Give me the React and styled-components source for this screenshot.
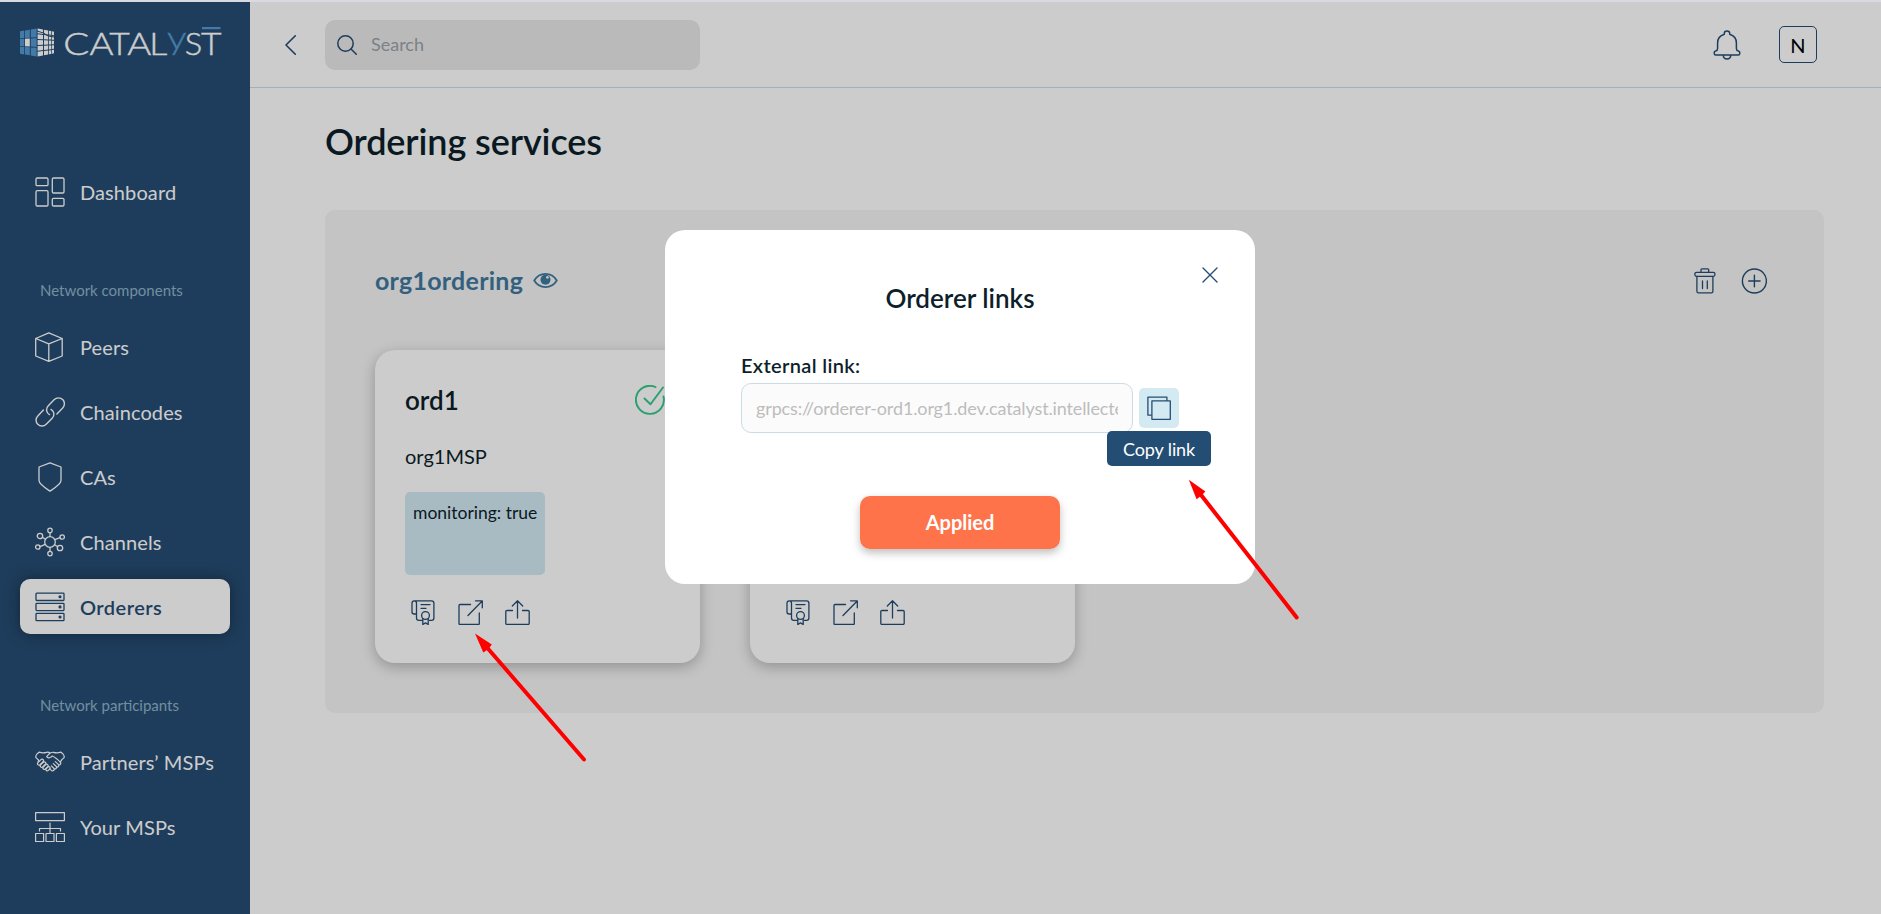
import React from "react";
import styled, { createGlobalStyle, css } from "styled-components";

const GlobalStyle = createGlobalStyle`
  *, *::before, *::after { box-sizing: border-box; }
  body {
    margin: 0;
    background: #ffffff;
    color: #0d1f2b;
    font-family: Lato, "Liberation Sans", sans-serif;
    overflow: hidden;
  }
  svg { display: block; flex: none; }
`;

const NAVY = "#264d73";

const TopStrip = styled.div`
  height: 2px;
  background: #d9d9e2;
`;

const Shell = styled.div`
  display: flex;
  height: 912px;
`;

const Sidebar = styled.aside`
  width: 250px;
  flex: none;
  padding: 24px 20px 0;
  background: ${NAVY};
  color: #fff;
`;

const LogoBox = styled.div`
  height: 32px;
  margin-bottom: 106px;
`;

const LogoSvg = styled.svg`
  overflow: visible;
`;

const LogoText = styled.text`
  font-family: Lato, sans-serif;
  font-weight: 300;
  font-size: 31px;
  fill: #fff;
  stroke: #fff;
  stroke-width: 0.4px;
`;

const LogoLetter = styled.tspan`
  ${(p) =>
    p.$accent &&
    css`
      fill: #549ad2;
      stroke: #549ad2;
      text-transform: lowercase;
    `}
`;

const NavGroup = styled.nav`
  display: flex;
  flex-direction: column;
  gap: 10px;
`;

const NavLabel = styled.div`
  margin: ${(p) => p.$top}px 0 19px 20px;
  font-size: 15px;
  line-height: 20px;
  color: #8fb3c8;
`;

const NavItem = styled.a`
  display: flex;
  align-items: center;
  gap: 15px;
  height: 55px;
  padding-left: 15px;
  border-radius: 10px;
  font-size: 20px;
  line-height: 24px;
  letter-spacing: 0.1px;
  white-space: nowrap;
  ${(p) =>
    p.$active &&
    css`
      background: #fff;
      color: ${NAVY};
      font-weight: 600;
      letter-spacing: 0.45px;
      box-shadow: 0 0 16px rgba(0, 0, 0, 0.4);
    `}
`;

const Main = styled.main`
  flex: 1;
  min-width: 0;
`;

const Header = styled.header`
  display: flex;
  align-items: center;
  height: 86px;
  padding: 0 64px 0 35px;
  border-bottom: 1px solid #cbdde6;
`;

const SearchBox = styled.label`
  display: flex;
  align-items: center;
  gap: 14px;
  width: 375px;
  height: 50px;
  margin-left: 29px;
  padding-left: 12px;
  border-radius: 10px;
  background: #e9e9e9;
`;

const SearchInput = styled.input`
  border: 0;
  padding: 0 0 2px;
  background: none;
  font: 400 18px/22px Lato, sans-serif;
  &::placeholder {
    color: #9aa3ab;
    opacity: 1;
  }
`;

const HeaderActions = styled.div`
  display: flex;
  align-items: center;
  gap: 38px;
  margin-left: auto;
`;

const Avatar = styled.div`
  display: flex;
  align-items: center;
  justify-content: center;
  width: 38px;
  height: 37px;
  border: 1px solid ${NAVY};
  border-radius: 5px;
  color: #000;
  font-size: 20px;
  font-weight: 400;
`;

const Content = styled.div`
  padding: 31px 57px 0 75px;
`;

const PageTitle = styled.h1`
  margin: 0 0 47px;
  font-size: 36px;
  font-weight: 600;
  line-height: 44px;
  letter-spacing: -0.1px;
`;

const Panel = styled.section`
  padding: 55px 50px 50px;
  border-radius: 10px;
  background: #f5f5f5;
`;

const PanelHeader = styled.div`
  display: flex;
  align-items: center;
  height: 31px;
  margin-bottom: 54px;
`;

const PanelTitle = styled.h2`
  margin: 0 10px 2px 0;
  font-size: 25px;
  font-weight: 700;
  line-height: 30px;
  letter-spacing: 0.25px;
  color: #42799f;
`;

const PanelActions = styled.div`
  display: flex;
  gap: 25px;
  margin: 0 7px 0 auto;
`;

const Cards = styled.div`
  display: flex;
  gap: 50px;
`;

const Card = styled.article`
  width: 325px;
  height: 313px;
  padding: 35px 30px 0;
  border-radius: 20px;
  background: #fff;
  box-shadow: 0 4px 14px rgba(0, 0, 0, 0.25);
`;

const CardHead = styled.div`
  display: flex;
  align-items: center;
  justify-content: space-between;
  height: 30px;
`;

const CardTitle = styled.h3`
  margin: 0;
  font-size: 26px;
  font-weight: 600;
  line-height: 30px;
`;

const CardOrg = styled.div`
  margin: 29px 0 24px;
  font-size: 20px;
  line-height: 24px;
`;

const Tag = styled.div`
  width: 140px;
  height: 83px;
  padding: 10px 0 0 8px;
  border-radius: 5px;
  background: #d3eaf4;
  font-size: 17.5px;
  line-height: 22px;
  white-space: nowrap;
`;

const CardActions = styled.div`
  display: flex;
  gap: 22px;
  margin: 25px 0 0 6px;
`;

const Overlay = styled.div`
  position: fixed;
  inset: 2px 0 0;
  display: flex;
  align-items: flex-start;
  justify-content: center;
  padding: 228px 0 0 39px;
  background: rgba(0, 0, 0, 0.2);
`;

const Modal = styled.div`
  position: relative;
  width: 590px;
  height: 354px;
  padding: 53px 76px 0;
  border-radius: 20px;
  background: #fff;
`;

const CloseButton = styled.button`
  position: absolute;
  top: 37px;
  right: 37px;
  padding: 0;
  border: 0;
  background: none;
`;

const ModalTitle = styled.h2`
  margin: 0 0 40px;
  font-size: 26px;
  font-weight: 600;
  line-height: 30px;
  text-align: center;
`;

const FieldLabel = styled.div`
  margin-bottom: 6px;
  font-size: 20px;
  font-weight: 600;
  line-height: 24px;
  letter-spacing: 0.35px;
`;

const FieldRow = styled.div`
  display: flex;
  align-items: center;
  gap: 6px;
`;

const LinkInput = styled.input`
  width: 392px;
  height: 50px;
  padding: 0 14px;
  border: 1px solid #cbdce6;
  border-radius: 10px;
  background: #fbfbfb;
  color: #bdbdbd;
  font: 400 18px/22px Lato, sans-serif;
  letter-spacing: -0.13px;
`;

const CopyWrap = styled.div`
  position: relative;
`;

const CopyButton = styled.button`
  display: flex;
  align-items: center;
  justify-content: center;
  width: 40px;
  height: 40px;
  padding: 0;
  border: 0;
  border-radius: 5px;
  background: #d4eaf3;
`;

const Tooltip = styled.div`
  position: absolute;
  top: 43px;
  left: 50%;
  width: 104px;
  height: 35px;
  transform: translateX(-52px);
  border-radius: 5px;
  background: #244d73;
  color: #fff;
  font-size: 18px;
  line-height: 36px;
  letter-spacing: -0.1px;
  text-align: center;
`;

const ApplyButton = styled.button`
  display: block;
  width: 200px;
  height: 53px;
  margin: 63px auto 0;
  padding: 0 0 2px;
  border: 0;
  border-radius: 10px;
  background: #ff734b;
  box-shadow: 0 4px 8px rgba(0, 0, 0, 0.25);
  color: #fff;
  font: 700 20px/24px Lato, sans-serif;
`;

const Annotations = styled.svg`
  position: fixed;
  inset: 0;
  pointer-events: none;
`;

const Icon = ({ w, h, sw = 1.3, color = "currentColor", children }) => (
  <svg
    width={w}
    height={h}
    viewBox={`0 0 ${w} ${h}`}
    fill="none"
    stroke={color}
    strokeWidth={sw}
    strokeLinecap="round"
    strokeLinejoin="round"
  >
    {children}
  </svg>
);

/* One tapered face of the logo cube, split in tiles. */
const cubeTiles = (cols, rows, half, gap) =>
  cols.flatMap(([x0, x1], c) =>
    Array.from({ length: rows }, (_, r) => {
      const y = (x, t) => 15 + half(x) * (2 * t - 1);
      const a = r / rows;
      const b = (r + 1) / rows;
      return {
        id: `${c}-${r}`,
        c,
        r,
        points: `${x0},${y(x0, a) + gap} ${x1},${y(x1, a) + gap} ${x1},${y(x1, b) - gap} ${x0},${y(x0, b) - gap}`,
      };
    })
  );

const leftTiles = cubeTiles([[0, 4.2], [5, 9.8], [10.8, 16.6]], 3, (x) => 11.6 + x * 0.17, 0.4);
const rightTiles = cubeTiles(
  [[17.6, 23], [24, 28.2], [29, 31.3], [32, 34]],
  5,
  (x) => 14.6 - (x - 17) * 0.19,
  0.5
);

/* Letter, left edge and advance of each glyph in the wordmark. */
const wordmark = [
  ["C", 43.2, 26],
  ["A", 69.5, 24],
  ["T", 89.2, 20.5],
  ["A", 107.3, 24],
  ["L", 129.3, 18],
  ["Y", 147, 19.5],
  ["S", 164.8, 17.5],
  ["T", 181, 20.5],
];

const Logo = () => (
  <LogoSvg width="206" height="32" viewBox="0 0 206 32">
    <g transform="translate(0 1.5)">
      {leftTiles.map((t) => (
        <polygon key={t.id} points={t.points} fill={t.c === 1 && t.r === 1 ? "#fff" : "#549ad2"} />
      ))}
      {rightTiles.map((t) => (
        <polygon key={t.id} points={t.points} fill="#fff" />
      ))}
      <path d="M17 3.500 23.500 5.500 28 8.500 34 9.500" fill="none" stroke={NAVY} strokeWidth="1" />
    </g>
    <LogoText>
      {wordmark.map(([letter, x, advance]) => (
        <LogoLetter
          key={x}
          x={x}
          y={letter === "Y" ? 22.7 : 28.7}
          textLength={advance}
          lengthAdjust="spacingAndGlyphs"
          $accent={letter === "Y"}
        >
          {letter}
        </LogoLetter>
      ))}
    </LogoText>
    <rect x="182" y="1" width="18.500" height="2.200" fill="#549ad2" />
  </LogoSvg>
);

const DashboardIcon = () => (
  <Icon w={30} h={30}>
    <rect x="1" y="1" width="12" height="7.600" rx="1.200" />
    <rect x="17.300" y="1" width="11.700" height="15" rx="1.200" />
    <rect x="1" y="13.700" width="12" height="15.300" rx="1.200" />
    <rect x="17.300" y="21.400" width="11.700" height="7.600" rx="1.200" />
  </Icon>
);

const CubeIcon = () => (
  <Icon w={30} h={30}>
    <path d="M13.8.8 27.2 6.5V24L13.8 29.4.7 24V6.5ZM.7 6.5l13.1 5.4 13.4-5.4M13.8 11.9v17.5" />
  </Icon>
);

const ChainIcon = () => (
  <Icon w={30} h={30} sw={1.4}>
    <path d="M14.5 17.6c-3.2-1.8-4-6-1.2-8.9l6-6.1c2.300-2.300 6.100-2.300 8.400 0s2.300 6 0 8.300l-5.800 6" />
    <path d="M16 12.400c3.200 1.800 4 6 1.200 8.900l-6 6c-2.300 2.300-6.100 2.300-8.400 0s-2.300-6 0-8.300l5.600-5.900" />
  </Icon>
);

const ShieldIcon = () => (
  <Icon w={30} h={30}>
    <path d="M15 .8 26 5v13.500c0 3.500-5.500 7-11 10.700C9.500 25.500 4 22 4 18.500V5Z" />
  </Icon>
);

const ChannelsIcon = () => (
  <Icon w={30} h={30}>
    <circle cx="15" cy="15" r="5.300" />
    <circle cx="15" cy="3.400" r="2.200" />
    <circle cx="15" cy="26.600" r="2.200" />
    <circle cx="5" cy="9" r="2.700" />
    <circle cx="27.200" cy="10" r="2.200" />
    <circle cx="2.800" cy="20" r="2.200" />
    <circle cx="25" cy="21" r="2.700" />
    <path d="M15 5.700v4M15 20.300v4M7.400 10.300l3 2M25 10.700l-5.200 2M5 19.600l5.200-2.200M22.700 19.700l-3-2" />
  </Icon>
);

const ServersIcon = () => (
  <Icon w={30} h={30}>
    {[1.2, 11.3, 21.4].map((y) => (
      <g key={y}>
        <rect x="1" y={y} width="28" height="7.300" rx=".8" />
        <circle cx="25" cy={y + 3.6} r=".9" fill="currentColor" />
      </g>
    ))}
  </Icon>
);

const HandshakeIcon = () => (
  <Icon w={30} h={22} sw={1.2}>
    <path d="M3.600 9.200.7 6.300c.2-2 1.600-4 3.600-5.200 2.500 1 5 .8 7.400.2 1.400-.3 2.400 0 3.300.7M26.400 9.200l2.900-2.900c-.2-2-1.600-4-3.600-5.200-2.500 1-5 .8-7.400.2-2-.4-3.200.7-4.600 2l-2 2.300c.9 1.600 3 1.500 4.400.3l1.200-.9c3.300 1.300 5.500 3.600 8 6.200" />
    <path d="M25.300 11.200c1.300 1.600-.6 3.400-2 2.200l-3-2.800M23.300 13.400c1.300 1.700-.6 3.400-2 2.100l-3-2.900M21.200 15.500c1.100 1.800-.8 3.200-2.200 2l-2.700-2.700M19 17.500c.8 1.800-1.200 2.900-2.500 1.900L14.800 18M26.400 9.200l-1.100 2" />
    <path d="M3.600 9.200 3 11.500M6.200 8.400 3 11.600c-1.400 1.500.5 3.400 2 2.100l3-3c1.400-1.300-.3-3.200-1.800-2.300M8 11.500 5.600 13.800c-1.200 1.500.6 3.300 2 2.100l2.800-2.800c1.300-1.400-.8-3.200-2.400-1.600M10.700 13.700l-2.400 2.300c-1.100 1.400.6 3.200 2 2l2.400-2.300c1.200-1.500-.7-3.300-2-2M13 16l-1.700 1.600c-1.100 1.400.7 3 2 1.800l1.500-1.400c1-1.500-.6-3-1.800-2" />
  </Icon>
);

const TreeIcon = () => (
  <Icon w={30} h={30} sw={1.2}>
    <rect x=".6" y=".6" width="28.800" height="8" />
    <path d="M15 11v10M4.500 19v-2.500h21V19" />
    <rect x=".6" y="21.500" width="8" height="8" />
    <rect x="11" y="21.500" width="8" height="8" />
    <rect x="21.400" y="21.500" width="8" height="8" />
  </Icon>
);

const BellIcon = () => (
  <Icon w={28} h={30} color={NAVY} sw={1.5}>
    <path d="M11.300 4.300V3.200c0-3 5.400-3 5.400 0v1.100c4.300 1.300 6.700 4.700 6.700 8.700v5.500c0 1.800.6 2.300 2 2.600 2 .5 1.900 4-.2 4H2.800c-2.100 0-2.200-3.500-.2-4 1.400-.3 2-.8 2-2.600V13c0-4 2.400-7.400 6.700-8.700ZM10.200 25.300c.3 5 7.300 5 7.600 0" />
  </Icon>
);

const TrashIcon = () => (
  <Icon w={22} h={26} color={NAVY}>
    <path d="M7 4.300V1.800c0-.6.400-1 1-1h5.700c.6 0 1 .4 1 1v2.500" />
    <rect x=".9" y="4.300" width="20" height="4" rx="1.500" />
    <path d="M2.900 8.300v14.900c0 1 .5 1.600 1.500 1.600h13c1 0 1.500-.6 1.500-1.600V8.300M8.500 13v7.500M13.300 13v7.500" />
  </Icon>
);

const AddIcon = () => (
  <Icon w={26} h={26} color={NAVY} sw={1.4}>
    <circle cx="13.400" cy="13" r="12" />
    <path d="M13.400 7.300v11.400M7.700 13h11.400" />
  </Icon>
);

const EyeIcon = () => (
  <svg width="25" height="17" viewBox="0 0 25 17">
    <path
      d="M1.200 8.500C6.500-.4 18.500-.4 23.800 8.500 18.500 17.200 6.500 17.200 1.200 8.500Z"
      fill="none"
      stroke="#42799f"
      strokeWidth="1.800"
    />
    <circle cx="12.500" cy="7.700" r="5" fill="#42799f" />
    <circle cx="14.400" cy="5.400" r="1.300" fill="#f5f5f5" />
  </svg>
);

const CheckIcon = () => (
  <Icon w={35} h={30} color="#35c98c" sw={1.9}>
    <path d="M20.500 2A14 14 0 1 0 28.500 11.500M9.500 13.500l6 5.800L28 2.500" />
  </Icon>
);

const CertificateIcon = () => (
  <Icon w={25} h={25} color={NAVY}>
    <path d="M5.500 14H3.200C1.800 14 1 13.300 1 12V3.200C1 1.700 1.800.8 3.200.8h17.400c1.500 0 2.300.8 2.300 2.300V18c0 1.500-.8 2.300-2.300 2.300h-2.300M11.300 20.300H7.800c-1.500 0-2.300-.8-2.300-2.300V3.200C5.500 1.700 4.700.8 3.300.8M10 4.600h9M10 8.300h5" />
    <circle cx="14.500" cy="15.500" r="3.900" />
    <path d="M11.800 18.500v6l2.700-1.600 2.700 1.600v-6" />
  </Icon>
);

const OpenIcon = () => (
  <Icon w={25} h={25} color={NAVY}>
    <path d="M12.500 4.500H2c-.7 0-1 .4-1 1V23.500c0 .6.400 1 1 1h18.300c.6 0 1-.4 1-1V13M10 15.500 24.200 1M17.500.8h6.800v7" />
  </Icon>
);

const ShareIcon = () => (
  <Icon w={25} h={25} color={NAVY}>
    <path d="M7.500 10.500H2c-.7 0-1.200.4-1.200 1.100v11.700c0 .7.500 1.200 1.200 1.200h21c.7 0 1.200-.5 1.200-1.200V11.600c0-.7-.5-1.100-1.200-1.100h-5.500M12.500 18V.9M7.300 6l5.200-5.200L17.700 6" />
  </Icon>
);

const CopyIcon = () => (
  <Icon w={24} h={24} color={NAVY}>
    <path d="M4.300 19.200H.9V1.200h19v3.200" />
    <rect x="4.900" y="4.900" width="18.400" height="18.400" />
  </Icon>
);

const componentLinks = [
  ["Peers", CubeIcon],
  ["Chaincodes", ChainIcon],
  ["CAs", ShieldIcon],
  ["Channels", ChannelsIcon],
  ["Orderers", ServersIcon],
];

const participantLinks = [
  ["Partners’ MSPs", HandshakeIcon],
  ["Your MSPs", TreeIcon],
];

const NavLinks = ({ links, active }) => (
  <NavGroup>
    {links.map(([name, Glyph]) => (
      <NavItem key={name} $active={name === active}>
        <Glyph />
        {name}
      </NavItem>
    ))}
  </NavGroup>
);

const OrdererCard = ({ name }) => (
  <Card>
    <CardHead>
      <CardTitle>{name}</CardTitle>
      <CheckIcon />
    </CardHead>
    <CardOrg>org1MSP</CardOrg>
    <Tag>monitoring: true</Tag>
    <CardActions>
      <CertificateIcon />
      <OpenIcon />
      <ShareIcon />
    </CardActions>
  </Card>
);

export default function App() {
  return (
    <>
      <GlobalStyle />
      <TopStrip />
      <Shell>
        <Sidebar>
          <LogoBox>
            <Logo />
          </LogoBox>
          <NavLinks links={[["Dashboard", DashboardIcon]]} />
          <NavLabel $top={61}>Network components</NavLabel>
          <NavLinks links={componentLinks} active="Orderers" />
          <NavLabel $top={61}>Network participants</NavLabel>
          <NavLinks links={participantLinks} />
        </Sidebar>
        <Main>
          <Header>
            <Icon w={11} h={20} color={NAVY} sw={1.6}>
              <path d="M10.300.8 1 10l9.300 9.200" />
            </Icon>
            <SearchBox>
              <Icon w={20} h={20} color={NAVY} sw={1.5}>
                <circle cx="8.500" cy="8.500" r="7.700" />
                <path d="m14 14 5.300 5.300" />
              </Icon>
              <SearchInput placeholder="Search" />
            </SearchBox>
            <HeaderActions>
              <BellIcon />
              <Avatar>N</Avatar>
            </HeaderActions>
          </Header>
          <Content>
            <PageTitle>Ordering services</PageTitle>
            <Panel>
              <PanelHeader>
                <PanelTitle>org1ordering</PanelTitle>
                <EyeIcon />
                <PanelActions>
                  <TrashIcon />
                  <AddIcon />
                </PanelActions>
              </PanelHeader>
              <Cards>
                <OrdererCard name="ord1" />
                <OrdererCard name="ord2" />
              </Cards>
            </Panel>
          </Content>
        </Main>
      </Shell>
      <Overlay>
        <Modal>
          <CloseButton aria-label="Close">
            <Icon w={16} h={16} color={NAVY} sw={1.4}>
              <path d="M1 1l14 14M15 1 1 15" />
            </Icon>
          </CloseButton>
          <ModalTitle>Orderer links</ModalTitle>
          <FieldLabel>External link:</FieldLabel>
          <FieldRow>
            <LinkInput readOnly value="grpcs://orderer-ord1.org1.dev.catalyst.intellecteu.com" />
            <CopyWrap>
              <CopyButton aria-label="Copy link">
                <CopyIcon />
              </CopyButton>
              <Tooltip>Copy link</Tooltip>
            </CopyWrap>
          </FieldRow>
          <ApplyButton>Applied</ApplyButton>
        </Modal>
      </Overlay>
      <Annotations width="1881" height="914" viewBox="0 0 1881 914">
        <g stroke="#f00" strokeWidth="4" strokeLinecap="round">
          <path d="M487 647.500 584 759.500" />
          <path d="M1199.500 493 1296.700 617.500" />
        </g>
        <g fill="#f00">
          <path d="M475 633.500 491.800 644.400 488.500 649 483.300 652.400Z" />
          <path d="M1188.800 479.700 1205.400 491.500 1201.500 495.500 1196.600 499.200Z" />
        </g>
      </Annotations>
    </>
  );
}
